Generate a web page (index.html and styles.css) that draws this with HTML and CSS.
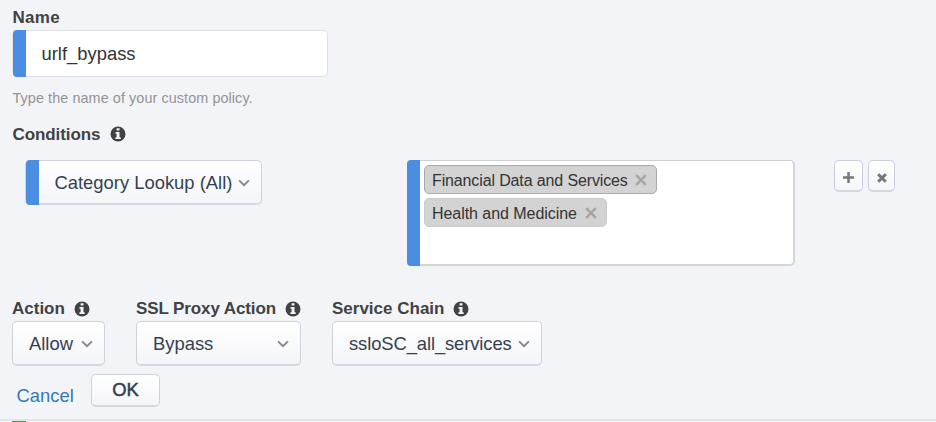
FILE: index.html
```html
<!DOCTYPE html>
<html lang="en">
<head>
<meta charset="utf-8">
<title>Policy rule</title>
<link rel="stylesheet" href="styles.css">
</head>
<body>
<svg class="defs" width="0" height="0" aria-hidden="true">
  <symbol id="info" viewBox="0 0 16 16"><circle cx="8" cy="8" r="7.5" fill="#414243"/><path d="M6.6 2.3h2.9v2.3H6.6zM5.5 6.1h4v5.2h1.2v1.8H5.4v-1.8h1.2V7.800H5.500z" fill="#f3f4f8"/></symbol>
  <symbol id="chevron" viewBox="0 0 12 8"><path d="M1.1 1.3 6 6.200l4.900-4.900" fill="none" stroke="#85878d" stroke-width="1.900"/></symbol>
  <symbol id="cross" viewBox="0 0 12 12"><path d="m1.200 1.200 9.600 9.600m0-9.600-9.600 9.600" fill="none" stroke="#a5a5a5" stroke-width="2.400"/></symbol>
</svg>
<form class="rule">
  <div class="label"><span class="t-name">Name</span></div>
  <div class="input marked"><span>urlf_bypass</span></div>
  <p class="help">Type the name of your custom policy.</p>
  <div class="label conditions-label"><span class="t-conditions">Conditions</span><svg class="info"><use href="#info"/></svg></div>
  <div class="conditions">
    <div class="select marked category"><span>Category Lookup (All)</span><svg class="chevron"><use href="#chevron"/></svg></div>
    <div class="multi marked">
      <div class="tag active"><span class="t-fin">Financial Data and Services</span><svg class="cross"><use href="#cross"/></svg></div>
      <div class="tag"><span class="t-health">Health and Medicine</span><svg class="cross"><use href="#cross"/></svg></div>
    </div>
    <div class="tools">
      <div class="tool add"><svg width="11" height="11" viewBox="0 0 11 11"><path d="M5.500 0v11M0 5.500h11" stroke="#777" stroke-width="2.500"/></svg></div>
      <div class="tool remove"><svg width="10" height="10" viewBox="0 0 10 10"><path d="m1.200 1.200 7.600 7.600m0-7.600L1.200 8.800" stroke="#777" stroke-width="3"/></svg></div>
    </div>
  </div>
  <div class="actions">
    <div class="field action">
      <div class="label"><span>Action</span><svg class="info"><use href="#info"/></svg></div>
      <div class="select"><span>Allow</span><svg class="chevron"><use href="#chevron"/></svg></div>
    </div>
    <div class="field proxy">
      <div class="label"><span class="t-proxy">SSL Proxy Action</span><svg class="info"><use href="#info"/></svg></div>
      <div class="select"><span>Bypass</span><svg class="chevron"><use href="#chevron"/></svg></div>
    </div>
    <div class="field chain">
      <div class="label"><span>Service Chain</span><svg class="info"><use href="#info"/></svg></div>
      <div class="select"><span class="t-services">ssloSC_all_services</span><svg class="chevron"><use href="#chevron"/></svg></div>
    </div>
  </div>
  <div class="buttons"><a class="cancel">Cancel</a><div class="ok">OK</div></div>
</form>
<div class="next"><div class="marker"></div></div>
</body>
</html>
```
FILE: styles.css
```css
* { box-sizing: border-box; }
body { margin: 0; width: 936px; height: 422px; overflow: hidden; background: #f3f4f8; font-family: "Liberation Sans", Arial, sans-serif; color: #414243; }
.defs { display: block; }
.rule { height: 421px; padding: 4px 12px 0; border-bottom: 2px solid #e4e5e9; }
.label { display: flex; align-items: center; height: 26px; padding: 1px 0 0 .5px; font-size: 17px; font-weight: 700; white-space: nowrap; }
.t-name { letter-spacing: .3px; }
.t-conditions { letter-spacing: -.08px; }
.t-proxy { letter-spacing: -.11px; }
.info { flex: none; width: 16px; height: 16px; margin-left: 9px; }
.marked { position: relative; }
.marked::before { content: ""; position: absolute; left: -.5px; top: -1px; bottom: -1px; width: 13px; background: #4b8de2; border-radius: 4px 0 0 4px; }
.input { display: flex; align-items: center; width: 316px; height: 47px; padding: 1px 0 0 28.5px; background: #fff; border: 1px solid #dfe1e8; border-radius: 5px; font-size: 18.4px; color: #333; }
.help { margin: 10px 0 0 .5px; height: 22px; line-height: 22px; font-size: 14.4px; letter-spacing: .08px; color: #929395; white-space: nowrap; }
.conditions-label { margin-top: 12px; }
.conditions-label .info { margin: -1px 0 0 10px; }
.conditions { display: flex; align-items: flex-start; margin: 13px 0 0 13px; height: 106px; }
.select { display: flex; align-items: center; justify-content: space-between; height: 45px; padding: 1px 11px 0 16px; border: 1px solid #cfd1dc; border-bottom: 2px solid #d5d7e1; border-radius: 5px; background: linear-gradient(#fff, #f4f5f8); font-size: 18.4px; color: #343f54; white-space: nowrap; }
.chevron { width: 12px; height: 8px; flex: none; }
.select.marked { width: 237px; padding-left: 28.5px; }
.select.marked::before { bottom: -2px; }
.multi { width: 388px; height: 106px; margin-left: 145px; padding: 4px 0 0 16px; background: #fff; border: 1px solid #cdcfd2; border-right: 2px solid #d4d5d7; border-bottom: 2px solid #d4d5d7; border-radius: 5px; }
.multi::before { left: -1px; bottom: -2px; }
.tag { display: flex; align-items: center; justify-content: space-between; width: 183px; height: 29px; padding: 2px 9px 0 7px; border: 1px solid #cacaca; border-radius: 5px; background: #d3d3d3; font-size: 16px; color: #333; white-space: nowrap; }
.tag.active { width: 233px; margin-bottom: 4px; border-color: #aaa; }
.t-fin { letter-spacing: -.13px; }
.t-health { letter-spacing: -.05px; }
.cross { width: 12px; height: 12px; flex: none; margin-top: -1px; }
.tools { display: flex; gap: 5px; margin-left: 39px; }
.tool { display: flex; align-items: center; justify-content: center; width: 29px; height: 32px; padding-top: 3px; border: 1px solid #cccddc; border-bottom: 2px solid #d5d6e2; border-radius: 5px; background: linear-gradient(#fff, #f5f6f9); }
.tool.remove { width: 27px; padding-top: 4px; }
.actions { display: flex; margin-top: 30px; gap: 31.500px; }
.field .label { height: 25px; padding-left: 0; }
.action { width: 92.5px; }
.proxy { width: 164.5px; }
.chain { width: 209.5px; }
.t-services { letter-spacing: -.1px; }
.buttons { display: flex; margin: 8px 0 0 4.5px; }
.cancel { margin-top: 10px; width: 74.5px; line-height: 24px; font-size: 18.4px; color: #3379b7; }
.ok { display: flex; align-items: center; justify-content: center; width: 69px; height: 33px; border: 1px solid #cfd1dc; border-bottom: 2px solid #d5d7e1; border-radius: 5px; background: linear-gradient(#fff, #f4f5f8); font-size: 18.4px; color: #343f54; -webkit-text-stroke: .5px #343f54; }
.next { height: 1px; padding-left: 12px; background: #f3f4f8; }
.marker { width: 14px; height: 1px; background: #2fa84c; }
```
